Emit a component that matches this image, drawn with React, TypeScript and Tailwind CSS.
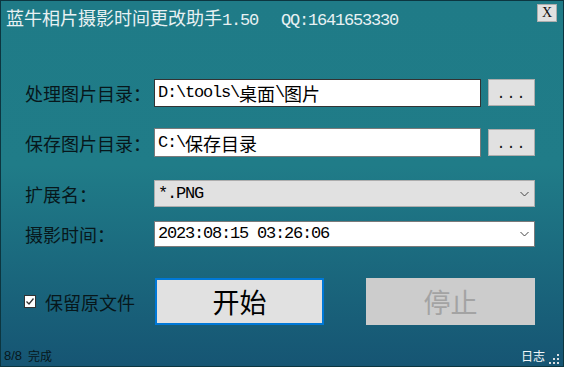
import type { ReactNode } from 'react'

// half-width latin text, the way the old SimSun rendering spaces it
function M({ children }: { children: ReactNode }) {
    return <span className="font-['Liberation_Mono',monospace] text-[17px] tracking-[-1.2px]">{children}</span>
}

function Chevron() {
    return (
        <svg width="9" height="5" viewBox="0 0 9 5" className="absolute right-[5px] top-1/2 -translate-y-1/2">
            <polyline points="0.5,0.5 4.5,4.5 8.5,0.5" fill="none" stroke="#444" strokeWidth="1" />
        </svg>
    )
}

function Label({ text }: { text: string }) {
    return <div className="w-[129px] shrink-0 text-[18px] leading-[20px] text-[#07171b]">{text}</div>
}

function DotsButton() {
    return (
        <button className="ml-[7px] w-[47px] h-[27px] bg-[#e1e1e1] border border-[#adadad] flex items-center justify-center text-[#111] leading-[15px] pt-[3px]">
            <span className="font-['Liberation_Mono',monospace] text-[15px] tracking-[1px]">...</span>
        </button>
    )
}

export default function App() {
    return (
        <div className="w-[564px] h-[367px] border border-[#0c3640] bg-linear-to-b from-[#1f7b87] via-[#207c88] via-45% to-[#165573] flex flex-col font-['Noto_Sans_CJK_SC',sans-serif]">

            <div className="h-[21px] flex items-start pt-[3px] pl-[5px] pr-[6px]">
                <div className="mt-[3px] h-[20px] flex items-baseline text-[18px] leading-[20px] text-[#e8f1f3] whitespace-pre">
                    <span>蓝牛相片摄影时间更改助手</span>
                    <M>1.50</M>
                    <span className="ml-[23px]"><M>QQ:1641653330</M></span>
                </div>
                <button className="ml-auto w-[20px] h-[18px] bg-[#e1e1e1] border border-[#adadad] flex items-center justify-center text-[14px] leading-[14px] text-[#111] font-['Liberation_Serif',serif]">
                    X
                </button>
            </div>

            <div className="flex items-center pl-[24px] mt-[56px] h-[29px]">
                <Label text="处理图片目录：" />
                <div className="w-[327px] h-[28px] bg-white border border-[#333] pl-[3px] flex items-center text-[18px] leading-[20px] text-black">
                    <M>D:\tools\</M>桌面<M>\</M>图片
                </div>
                <DotsButton />
            </div>

            <div className="flex items-center pl-[24px] mt-[21px] h-[29px]">
                <Label text="保存图片目录：" />
                <div className="w-[327px] h-[29px] bg-white border border-[#7a7a7a] pl-[3px] flex items-center text-[18px] leading-[20px] text-black">
                    <M>C:\</M>保存目录
                </div>
                <DotsButton />
            </div>

            <div className="flex items-center pl-[24px] mt-[23px] h-[27px]">
                <Label text="扩展名：" />
                <div className="relative w-[381px] h-[27px] bg-[#e1e1e1] border border-[#adadad] pl-[3px] flex items-center text-black leading-[20px]">
                    <M>*.PNG</M>
                    <Chevron />
                </div>
            </div>

            <div className="flex items-center pl-[24px] mt-[14px] h-[26px]">
                <Label text="摄影时间：" />
                <div className="relative w-[381px] h-[26px] bg-white border border-[#7a7a7a] pl-[3px] flex items-center text-black leading-[20px]">
                    <M>2023:08:15 03:26:06</M>
                    <Chevron />
                </div>
            </div>

            <div className="flex items-center pl-[23px] mt-[31px] h-[47px]">
                <div className="w-[131px] shrink-0 flex items-center">
                    <svg width="12" height="13" viewBox="0 0 12 13">
                        <rect x="0.5" y="0.5" width="11" height="12" fill="#fff" stroke="#333" />
                        <polyline points="2.5,6.5 5,9 9.5,3.5" fill="none" stroke="#333" strokeWidth="1.3" />
                    </svg>
                    <span className="ml-[9px] text-[18px] leading-[20px] text-[#07171b]">保留原文件</span>
                </div>
                <button className="w-[169px] h-[47px] bg-[#e1e1e1] border-2 border-[#0078d7] text-[27px] leading-[30px] text-black">
                    开始
                </button>
                <button className="ml-[42px] w-[169px] h-[47px] bg-[#cccccc] text-[27px] leading-[30px] text-[#a3a3a3]">
                    停止
                </button>
            </div>

            <div className="mt-auto flex items-center pl-[3px] pb-[2px] h-[18px] text-[12px] leading-[16px]">
                <span className="text-[#07171b] font-['Liberation_Sans',sans-serif] text-[13px]">8/8</span>
                <span className="ml-[6px] text-[#07171b]">完成</span>
                <span className="ml-auto text-[#f2f6f8]">日志</span>
                <svg width="12" height="11" viewBox="0 0 12 11" className="ml-[3px] mr-[3px] self-end mb-[-1px]">
                    <rect x="9" y="0" width="2" height="2" fill="#d8dde0" />
                    <rect x="5" y="4" width="2" height="2" fill="#d8dde0" />
                    <rect x="9" y="4" width="2" height="2" fill="#d8dde0" />
                    <rect x="1" y="8" width="2" height="2" fill="#d8dde0" />
                    <rect x="5" y="8" width="2" height="2" fill="#d8dde0" />
                    <rect x="9" y="8" width="2" height="2" fill="#d8dde0" />
                </svg>
            </div>
        </div>
    )
}
